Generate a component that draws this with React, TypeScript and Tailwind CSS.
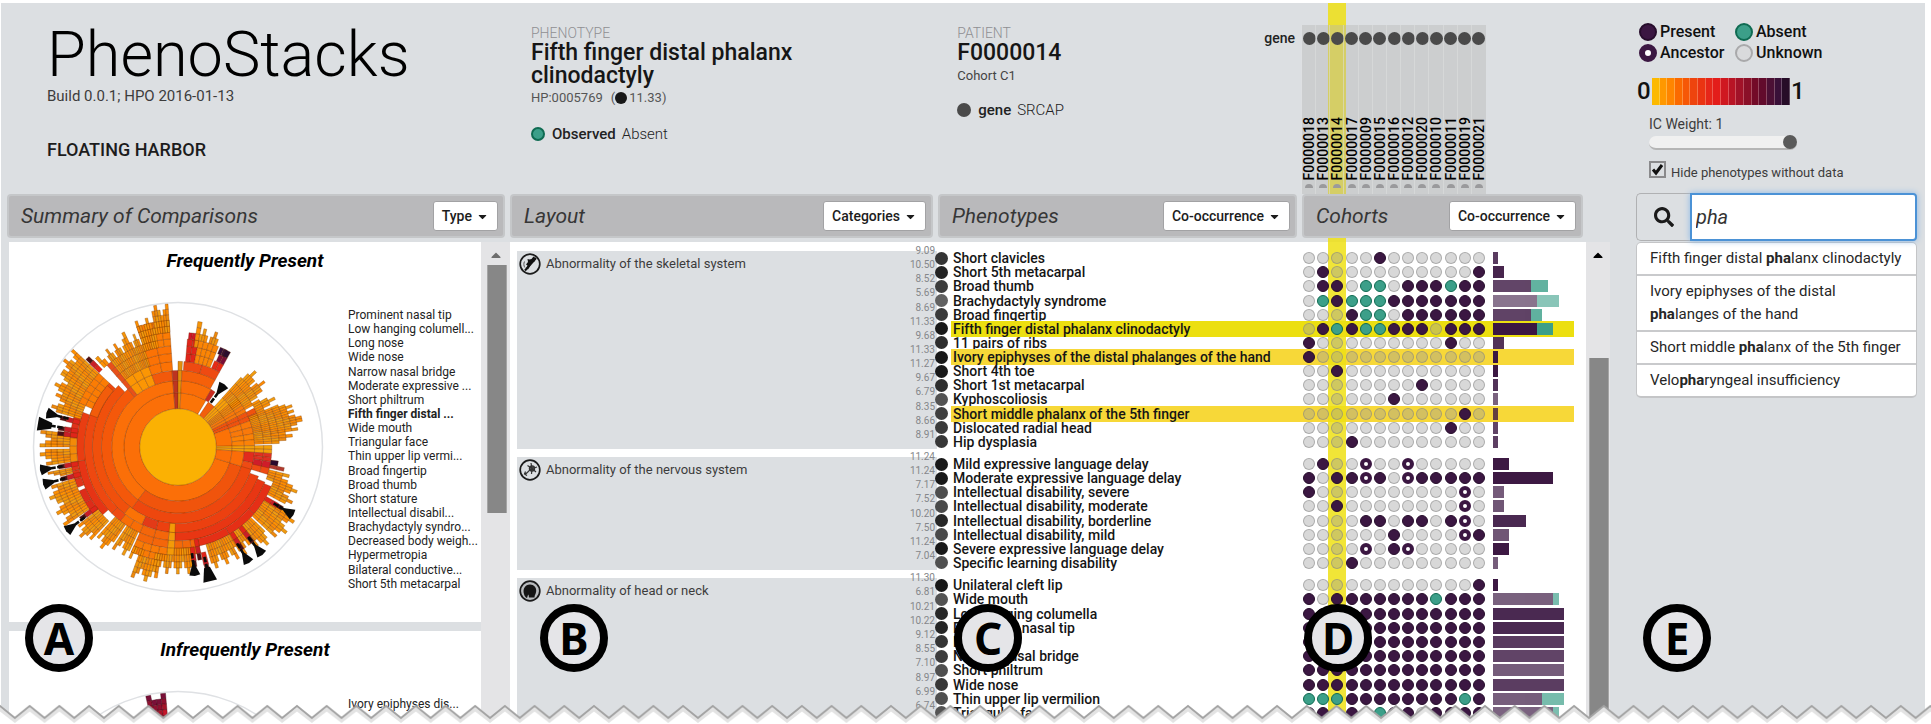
import React from "react";
import { FaSearch, FaCaretDown, FaCaretUp } from "react-icons/fa";

type Phenotype = { name: string; ic: number; cells: string; mark?: "selected" | "match" };
type Group = { title: string; icon: "bone" | "nerve" | "head"; height: string; rows: Phenotype[] };

const patients = ["18", "13", "14", "17", "09", "15", "16", "12", "20", "10", "11", "19", "21"].map((n) => "F00000" + n);

const groups: Group[] = [
  {
    title: "Abnormality of the skeletal system",
    icon: "bone",
    height: "h-[198px]",
    rows: [
      { name: "Short clavicles", ic: 9.09, cells: ".....P......." },
      { name: "Short 5th metacarpal", ic: 10.5, cells: ".P..........P" },
      { name: "Broad thumb", ic: 8.52, cells: ".PP.AA.PPPAPP" },
      { name: "Brachydactyly syndrome", ic: 5.69, cells: ".APAAAPPPPPPP" },
      { name: "Broad fingertip", ic: 8.69, cells: "...PAA.PPPPPP" },
      { name: "Fifth finger distal phalanx clinodactyly", ic: 11.33, cells: ".PAPAAPPP.PPP", mark: "selected" },
      { name: "11 pairs of ribs", ic: 9.68, cells: "P.........P.." },
      { name: "Ivory epiphyses of the distal phalanges of the hand", ic: 11.33, cells: "P............", mark: "match" },
      { name: "Short 4th toe", ic: 11.27, cells: "..P.........." },
      { name: "Short 1st metacarpal", ic: 9.67, cells: "........P...." },
      { name: "Kyphoscoliosis", ic: 6.79, cells: "......P......" },
      { name: "Short middle phalanx of the 5th finger", ic: 8.35, cells: "...........P.", mark: "match" },
      { name: "Dislocated radial head", ic: 8.66, cells: "..........P.." },
      { name: "Hip dysplasia", ic: 8.91, cells: "...P........." },
    ],
  },
  {
    title: "Abnormality of the nervous system",
    icon: "nerve",
    height: "h-[113px]",
    rows: [
      { name: "Mild expressive language delay", ic: 11.24, cells: ".P..N..N....." },
      { name: "Moderate expressive language delay", ic: 11.24, cells: "P.PPNP.NPPPPP" },
      { name: "Intellectual disability, severe", ic: 7.17, cells: "P..........N." },
      { name: "Intellectual disability, moderate", ic: 7.52, cells: "..P........N." },
      { name: "Intellectual disability, borderline", ic: 10.2, cells: "....PP.PP.PN." },
      { name: "Intellectual disability, mild", ic: 7.5, cells: "......P....NP" },
      { name: "Severe expressive language delay", ic: 11.24, cells: "....N.PN....." },
      { name: "Specific learning disability", ic: 7.04, cells: "...P........." },
    ],
  },
  {
    title: "Abnormality of head or neck",
    icon: "head",
    height: "h-[142px]",
    rows: [
      { name: "Unilateral cleft lip", ic: 11.3, cells: "............P" },
      { name: "Wide mouth", ic: 6.81, cells: "P.PPPPPPPAPPP" },
      { name: "Low hanging columella", ic: 10.21, cells: "PPPPPPPPPPPPP" },
      { name: "Prominent nasal tip", ic: 10.22, cells: "PPPPPPPPPPPPP" },
      { name: "Long nose", ic: 9.12, cells: "PPPPPPPPPPPPP" },
      { name: "Narrow nasal bridge", ic: 8.55, cells: "PPPPPPPPPPPPP" },
      { name: "Short philtrum", ic: 7.1, cells: "PPPPPPPPPPPPP" },
      { name: "Wide nose", ic: 8.97, cells: "PPPPPPPPPPPPP" },
      { name: "Thin upper lip vermilion", ic: 6.99, cells: "AAAPPPPPPPPAP" },
      { name: "Triangular face", ic: 6.74, cells: "PPPPPAPP.PPPP" },
    ],
  },
];

const frequent = [
  "Prominent nasal tip", "Low hanging columell...", "Long nose", "Wide nose", "Narrow nasal bridge",
  "Moderate expressive ...", "Short philtrum", "Fifth finger distal ...", "Wide mouth", "Triangular face",
  "Thin upper lip vermi...", "Broad fingertip", "Broad thumb", "Short stature", "Intellectual disabil...",
  "Brachydactyly syndro...", "Decreased body weigh...", "Hypermetropia", "Bilateral conductive...", "Short 5th metacarpal",
];

/* ---------- sunburst ---------- */

// [start angle, end angle, first ring, last ring (exclusive), colour, angular splits]
type Band = [number, number, number, number, string, number?];

const bands: Band[] = [
  [107, 355.5, 1, 2, "#fb6f08"],
  [217, 355.5, 2, 3, "#fb6f08"],
  [107, 217, 2, 3, "#f0540c"],
  [106, 217, 3, 4, "#ee470e"],
  [217, 319, 3, 4, "#f4580a"],
  [110, 195, 4, 5, "#ec4010"],
  [195, 205, 4, 5, "#e33a18"],
  [205, 219, 4, 5, "#fa7206"],
  [219, 316, 4, 5, "#f0500c"],
  [112, 182, 5, 6, "#e83613"],
  [182, 186, 4, 8, "#f39a08"],
  [186, 204, 5, 7, "#f4660a", 2],
  [204, 218, 5, 6, "#f86d06", 2],
  [218, 225, 5, 6, "#ee4a12"],
  [225, 313, 5, 6, "#ee4810"],
  [113, 168, 6, 7, "#e52f16", 3],
  [228, 262, 6, 7, "#e63415"],
  [262, 290, 6, 7, "#e93d12"],
  [290, 311, 5, 6, "#f25c0b"],
  [232, 246, 7, 8, "#dd2c1a", 2],
  [248, 262, 7, 8, "#e0341a", 3],
  [262, 275, 7, 8, "#f28a08", 3],
  [275, 287, 7, 8, "#e0311b", 3],
  [186, 204, 7, 9, "#f97a06", 4],
  [168, 182, 6, 8, "#f2690a", 3],
  [294, 313, 6, 8, "#fb7c04", 5],
  [319, 322, 3, 8, "#e8501a"],
  [322, 340, 3, 5, "#fb9604", 3],
  [340, 355.5, 3, 4, "#f2590b"],
  [340, 356, 4, 7, "#fb7205", 2],
  [341, 356, 7, 11, "#fb7c05", 4],
  [355.5, 360, 1, 4, "#bd3420"],
  [360, 363, 1, 5, "#e2900c"],
  [3, 31, 1, 2, "#fb7407"],
  [3, 30, 2, 3, "#fa6d08"],
  [3, 29, 3, 4, "#f5600a"],
  [4, 29, 4, 5, "#ee4a12", 2],
  [5, 11, 5, 8, "#e0251b", 2],
  [11, 22, 5, 8, "#fb8505", 4],
  [23, 29, 5, 6, "#e62a17", 2],
  [24, 29, 6, 7, "#7a0f38", 2],
  [23, 27, 7, 8, "#34103a", 2],
  [26, 29, 7, 8, "#2b0d2e"],
  [5.5, 9, 8, 9, "#ce1627", 2],
  [30, 34, 2, 3, "#c92b22"],
  [34, 42, 1, 2, "#f25e0c"],
  [42, 50, 1, 3, "#f8a008", 3],
  [50, 57, 1, 4, "#f58a08", 4],
  [57, 63, 1, 4, "#f7790a", 2],
  [63, 70, 1, 5, "#f0520e", 2],
  [70, 89, 1, 2, "#fb7206"],
  [70, 80, 2, 4, "#f9790a", 2],
  [80, 89, 2, 4, "#fb8206", 2],
  [89, 94, 1, 6, "#f3a00a", 2],
  [94, 107, 1, 3, "#fb6d08"],
  [94, 102, 3, 4, "#e22b1e"],
  [102, 107, 3, 6, "#ee4b14"],
  [94, 99, 4, 6, "#e03022", 2],
  [99, 103, 4, 6, "#cf1d2a"],
  [98, 101, 6, 7, "#2a0b2c"],
  [101, 103, 6, 8, "#b03a30"],
];

// Fine outer leaves: [start, end, first ring, mean outer ring, splits]
const leaves: [number, number, number, number, number][] = [
  [9, 11, 7, 10, 1],
  [11, 22, 8, 9, 8],
  [42, 48, 3, 7, 4],
  [48, 55, 3, 7, 5],
  [55, 61, 4, 6, 4],
  [61, 67, 5, 7, 4],
  [67, 72, 4, 9, 4],
  [72, 77, 4, 10, 4],
  [77, 82, 4, 10, 4],
  [82, 88, 4, 8, 4],
  [85, 87, 8, 9, 1],
  [104, 110, 6, 9, 4],
  [110, 118, 7, 10, 6],
  [121, 133, 7, 12, 9],
  [134, 142, 7, 11, 6],
  [143, 151, 7, 10, 6],
  [151, 164, 7, 10, 10],
  [173, 182, 7, 10, 7],
  [182, 192, 8, 10, 8],
  [189, 200, 9, 12, 8],
  [198, 204, 8, 9, 5],
  [205, 213, 6, 9, 6],
  [214, 222, 6, 10, 6],
  [223, 232, 7, 11, 7],
  [235, 246, 8, 12, 8],
  [246, 253, 8, 12, 5],
  [256, 259, 8, 11, 3],
  [262, 269, 8, 12, 5],
  [270, 277, 8, 12, 5],
  [286, 294, 7, 11, 6],
  [294, 303, 8, 12, 7],
  [303, 313, 8, 13, 8],
  [317, 322, 8, 9, 3],
  [322, 331, 5, 9, 8],
  [331, 335, 5, 10, 3],
  [335, 341, 5, 9, 6],
  [341, 349, 7, 11, 7],
  [349, 356, 9, 13, 6],
];

const redTips: [number, number][] = [
  [284, 9], [279, 9], [276.5, 9], [260.5, 9], [254.5, 9], [314.5, 10], [172, 9], [166.5, 10], [169, 8], [148, 9], [142, 9], [120.5, 9], [233.5, 9],
];

const flags: [number, number, number][] = [
  [36.5, 68, 1], [284.5, 126, 1], [279.5, 130, 2], [260.5, 130, 1], [254.5, 130, 1], [233, 130, 1],
  [172.5, 120, 1], [166.5, 126, 2], [148.5, 126, 1], [142, 127, 1], [120.5, 124, 1],
];

const ring = (l: number) => 38.3 * Math.sqrt(l);
const point = (r: number, a: number) => {
  const t = (a * Math.PI) / 180;
  return `${(r * Math.sin(t)).toFixed(2)} ${(-r * Math.cos(t)).toFixed(2)}`;
};
const arc = (a0: number, a1: number, l0: number, l1: number) => {
  const r0 = ring(l0);
  const r1 = ring(l1);
  const big = a1 - a0 > 180 ? 1 : 0;
  return `M${point(r0, a0)}A${r0} ${r0} 0 ${big} 1 ${point(r0, a1)}L${point(r1, a1)}A${r1} ${r1} 0 ${big} 0 ${point(r1, a0)}Z`;
};
const leafColours = ["#f59508", "#fb8a04", "#f09c10", "#fd9003", "#ee8a0c"];

function Burst() {
  const shapes: React.ReactNode[] = [];
  bands.forEach(([a0, a1, l0, l1, fill, split = 1], b) => {
    const step = (a1 - a0) / split;
    for (let l = l0; l < l1; l++)
      for (let s = 0; s < split; s++)
        shapes.push(<path key={`b${b}-${l}-${s}`} d={arc(a0 + s * step, a0 + (s + 1) * step, l, l + 1)} fill={fill} />);
  });
  leaves.forEach(([a0, a1, l0, l1, split], b) => {
    const step = (a1 - a0) / split;
    for (let s = 0; s < split; s++) {
      const h = (s * 7 + b * 5) % 4;
      const top = h === 0 ? l1 + 1 : h === 2 ? l1 - 1 : l1;
      for (let l = l0; l < Math.min(top, 13.5); l++)
        shapes.push(
          <path key={`l${b}-${l}-${s}`} d={arc(a0 + s * step, a0 + (s + 1) * step, l, l + 1)} fill={leafColours[(s * 3 + l * 2 + b) % 5]} />
        );
    }
  });
  return (
    <g>
      <g stroke="#6b2c00" strokeOpacity="0.6" strokeWidth="0.5">
        {shapes}
        {redTips.map(([a, l], i) => (
          <g key={i}>
            <path d={arc(a - 1.2, a + 1.2, l - 2, l - 1)} fill="#e0251b" />
            <path d={arc(a - 1.2, a + 1.2, l - 1, l)} fill="#c81e28" />
            <path d={arc(a - 1, a + 1, l, l + 1)} fill="#4a1018" />
          </g>
        ))}
        <circle r="38.3" fill="#fbb103" />
      </g>
      {flags.map(([a, r, n], i) => (
        <g key={i} transform={`rotate(${a}) translate(0 ${-r})`} fill="#0b0b0b">
          <path d="M0 0V13" stroke="#0b0b0b" strokeWidth="2.600" strokeDasharray="6 1.500" />
          <path d={n === 2 ? "M-7 -12L7 -12L3 2L-3 2Z" : "M-5.500 -9L0 -10L5.500 -9L1.500 1L-1.500 1Z"} />
        </g>
      ))}
    </g>
  );
}

function SmallBurst() {
  const fills = ["#7a0f38", "#8f1030", "#a51329", "#c4162a"];
  return (
    <g stroke="#3a0612" strokeOpacity="0.6" strokeWidth="0.6">
      {[347, 349, 351, 353].map((a, i) =>
        [13, 12, 11, 10, 9, 8].slice(i === 1 || i === 2 ? 1 : 0).map((l, k) => (
          <path key={`${a}-${l}`} d={arc(a, a + 2, l, l + 1)} fill={fills[Math.min(k, 3)]} />
        ))
      )}
      {[334, 336].map((a) => (
        <path key={a} d={arc(a, a + 2, 10, 11)} fill="#5b1848" />
      ))}
    </g>
  );
}

function SummaryCard({ title, items, strong, chart }: { title: string; items: string[]; strong?: string; chart: React.ReactNode }) {
  return (
    <section className="h-[380px] shrink-0 overflow-hidden bg-white">
      <h3 className="pt-[7px] text-center text-[19px] leading-6 font-bold text-black italic">{title}</h3>
      <div className="flex pt-[28px] pl-[23px]">
        <svg className="shrink-0" width="292" height="292" viewBox="-146 -146 292 292" aria-hidden="true">
          <circle r="144.500" fill="white" stroke="#dfe1e4" strokeWidth="1.500" />
          {chart}
        </svg>
        <ol className="mt-[7px] ml-[24px] flex h-[283px] flex-col text-[12px] whitespace-nowrap text-[#222]">
          {items.map((t) => (
            <li key={t} className={t === strong ? "flex h-[5%] items-center leading-none font-bold" : "flex h-[5%] items-center leading-none"}>
              {t}
            </li>
          ))}
        </ol>
      </div>
    </section>
  );
}

/* ---------- shared bits ---------- */

function Bar({ title, button, className }: { title: string; button: string; className: string }) {
  return (
    <div className={`relative z-20 flex h-[44px] items-center justify-between rounded-[4px] border-2 border-[#c5c7c9] bg-[#b9b9bb] pr-[5px] pl-3 ${className}`}>
      <h2 className="text-[21px] leading-none text-[#363636] italic">{title}</h2>
      <button className="flex h-[30px] items-center gap-1 rounded-[3px] border border-[#a2a2a4] bg-white px-2 text-[14px] font-medium text-[#1c1c1c]">
        {button}
        <FaCaretDown className="size-[13px]" />
      </button>
    </div>
  );
}

const dotStyles: Record<string, string> = {
  P: "size-3 rounded-full border border-[#270d2c] bg-[#3b1742]",
  A: "size-3 rounded-full border border-[#0f6b52] bg-[#3c9f89]",
  N: "size-3 rounded-full border-4 border-[#3b1742] bg-white",
  ".": "size-3 rounded-full border border-[#80808080] bg-[#9d9d9d66]",
};

function Row({ row }: { row: Phenotype }) {
  const shade = Math.round(24 + (11.33 - row.ic) * 13);
  const present = row.cells.split("").filter((c) => c === "P" || c === "N").length;
  const absent = row.cells.split("").filter((c) => c === "A").length;
  const mark = row.mark === "selected" ? "bg-[#ecdf10]" : row.mark === "match" ? "bg-[#f7d838]" : "";
  return (
    <div className="flex min-h-0 flex-1 items-center">
      <span className="relative z-10 -ml-[2px] size-[13px] shrink-0 rounded-full" style={{ backgroundColor: `rgb(${shade},${shade},${shade})` }} />
      <div className={`ml-[3px] flex h-4 min-w-0 flex-1 items-center ${mark}`}>
        <span className="w-[351px] pl-[2px] text-[14px] leading-4 font-medium whitespace-nowrap text-[#151515]">{row.name}</span>
        <span className="relative z-10 flex w-[184px]">
          {row.cells.split("").map((c, i) => (
            <span key={i} className="flex flex-1 justify-center">
              <span className={dotStyles[c]} />
            </span>
          ))}
        </span>
        <span className="ml-[7px] flex h-3 w-[71px]" style={{ opacity: 0.2 + (0.8 * row.ic) / 11.33 }}>
          <span className="bg-[#3b1742]" style={{ width: `${(present / 13) * 100}%` }} />
          <span className="bg-[#3c9f89]" style={{ width: `${(absent / 13) * 100}%` }} />
        </span>
      </div>
    </div>
  );
}

function CategoryIcon({ kind }: { kind: Group["icon"] }) {
  return (
    <svg width="22" height="22" viewBox="0 0 22 22" aria-hidden="true">
      <circle cx="11" cy="11" r="9.8" fill={kind === "head" ? "#b9bcbf" : "#dcdfe2"} stroke="#1b1b1b" strokeWidth="1.7" />
      {kind === "bone" && (
        <g fill="#111">
          <path d="M14.5 3.5l2.5 2-1.5 3-3 1.5-2 4-1.5 2.5-2-1 1.500-3-1.500-1 2-2.500-.5-3 2 .5 2-.5z" />
          <path d="M17 5L6 17.500" stroke="#111" strokeWidth="2" />
          <path d="M5.500 8.500c-1 2-.8 4.500.4 6" stroke="#555" fill="none" />
        </g>
      )}
      {kind === "nerve" && (
        <g stroke="#333" fill="#555" strokeWidth="1.200">
          <circle cx="13" cy="9.500" r="2.600" />
          <path d="M13 9.500L12 4M13 9.500L18 8M13 9.500L17 13M13 9.500L8.500 6.500M13 9.500L12.500 15M13 9.500C9 11 9 15 5.500 15M6.500 12.500l-1 2.500 2.500 1.500" fill="none" />
        </g>
      )}
      {kind === "head" && <path d="M5 14c-1.500-5 1-9.500 6-9.500 4 0 6.500 3 6.200 6.500-.2 3-1.700 4-1.700 6.500h-5.500l-.5-3c-1 1-1 2.500-1.500 3.500C6.500 17.500 5.500 16 5 14z" fill="#161616" />}
    </svg>
  );
}

function ScrollTrack({ className, thumb, caret }: { className: string; thumb: string; caret: string }) {
  return (
    <div className={`flex flex-col bg-[#e4e4e6] ${className}`}>
      <FaCaretUp className={`size-4 self-center ${caret}`} />
      <div className={`border-x border-[#a5a5a5] bg-[#878787] ${thumb}`} />
    </div>
  );
}

function Badge({ letter, className }: { letter: string; className: string }) {
  return (
    <span className={`absolute top-[604px] z-30 flex size-[68px] items-center justify-center rounded-full border-[8px] border-black bg-[#e5e5e8] font-['Noto_Sans'] text-[44px] leading-none font-bold text-black ${className}`}>
      {letter}
    </span>
  );
}

const ramp = [
  "bg-[#fcb900]", "bg-[#ff9800]", "bg-[#ff8500]", "bg-[#fb6a00]", "bg-[#f65806]", "bg-[#ee440e]", "bg-[#ea3412]",
  "bg-[#e62619]", "bg-[#e31d1a]", "bg-[#cf1820]", "bg-[#b81425]", "bg-[#a11228]", "bg-[#8a1028]", "bg-[#730b28]",
  "bg-[#620b2c]", "bg-[#4c1035]", "bg-[#391038]", "bg-[#260c28]",
];

const suggestions = [
  ["Fifth finger distal ", "lanx clinodactyly"],
  ["Ivory epiphyses of the distal ", "langes of the hand"],
  ["Short middle ", "lanx of the 5th finger"],
  ["Velo", "ryngeal insufficiency"],
];

const legend = [
  { label: "Present", dot: "border-[#270d2c] bg-[#3b1742] border-2" },
  { label: "Absent", dot: "border-[#0f6b52] bg-[#3c9f89] border-2" },
  { label: "Ancestor", dot: "border-[#3b1742] bg-white border-[6px]" },
  { label: "Unknown", dot: "border-[#a9a9ab] bg-[#d9dadc] border-2" },
];

function Torn() {
  return (
    <svg className="absolute bottom-0 left-0 z-40 h-[20px] w-full" aria-hidden="true">
      <defs>
        <pattern id="torn" width="29.7" height="20" patternUnits="userSpaceOnUse">
          <path d="M-2 1L0 2L14.850 14L29.700 2L32 4V20H-2Z" fill="white" />
          <path d="M-5 9.500L0 5.500L14.850 17L29.700 5.500L34 9" fill="none" stroke="#e3e3e3" strokeWidth="3" />
          <path d="M-5 6L0 2L14.850 14L29.700 2L34 6" fill="none" stroke="#a3a3a3" strokeWidth="2" />
        </pattern>
      </defs>
      <rect width="100%" height="20" fill="url(#torn)" />
    </svg>
  );
}

export default function App() {
  return (
    <div className="relative h-screen overflow-hidden bg-white pt-[3px] pr-[6px] pl-px font-['Roboto','Liberation_Sans',sans-serif] text-[#222]">
      <div className="flex h-full bg-[#dcdfe2]">
        <main className="relative flex min-w-0 flex-1 flex-col">
          <div className="absolute top-0 right-[264px] bottom-0 w-[18px] bg-[#eee114d9]" />

          <header className="flex h-[191px] shrink-0">
            <div className="w-[530px] shrink-0 pl-[46px]">
              <h1 className="mt-[20px] text-[63px] leading-[64px] font-light text-black">PhenoStacks</h1>
              <p className="-mt-px text-[15px] leading-5 text-[#3c3c3c]">Build 0.0.1; HPO 2016-01-13</p>
              <p className="mt-[32px] text-[18px] leading-6 font-medium text-[#1c1c1c]">FLOATING HARBOR</p>
            </div>
            <div className="min-w-0 flex-1 pt-[22px]">
              <p className="text-[14px] leading-4 font-light text-[#8f8f92]">PHENOTYPE</p>
              <h2 className="w-[290px] text-[23px] leading-[23px] font-medium text-[#161616]">Fifth finger distal phalanx clinodactyly</h2>
              <p className="mt-[1px] flex items-center text-[13px] leading-5 text-[#555]">
                HP:0005769<span className="ml-2">(</span>
                <span className="size-3 rounded-full bg-[#181818]" />
                <span className="ml-[2px]">11.33)</span>
              </p>
              <p className="mt-[14px] flex items-center text-[15px] leading-6">
                <span className="mr-[7px] size-[14px] rounded-full border-2 border-[#0f6b52] bg-[#3c9f89]" />
                <span className="mr-[6px] font-medium">Observed</span>
                <span className="font-light">Absent</span>
              </p>
            </div>
            <div className="w-[307px] shrink-0 pt-[22px]">
              <p className="text-[14px] leading-4 font-light text-[#8f8f92]">PATIENT</p>
              <h2 className="text-[23px] leading-[23px] font-medium text-[#161616]">F0000014</h2>
              <p className="mt-[2px] text-[13px] leading-5 text-[#444]">Cohort C1</p>
              <p className="mt-[12px] flex items-center text-[15px] leading-6">
                <span className="mr-[7px] size-[14px] rounded-full bg-[#4a4a4a]" />
                <span className="mr-[6px] font-medium">gene</span>
                <span className="font-light">SRCAP</span>
              </p>
            </div>
            <div className="mr-[124px] flex shrink-0 pt-[22px]">
              <span className="relative z-10 mt-[3px] mr-[7px] text-[14px] leading-5 font-medium">gene</span>
              <ul className="relative z-10 flex w-[184px] shrink-0">
                {patients.map((p) => (
                  <li key={p} className="flex w-0 min-w-0 flex-1 flex-col items-center bg-[#b4b4b466] shadow-[-1px_0_0_#e0e1e180]">
                    <span className="mt-[7px] size-[13px] shrink-0 rounded-full bg-[#4a4a4a]" />
                    <span className="mt-auto mb-[4px] rotate-180 text-[14px] leading-[14px] font-medium text-black [writing-mode:vertical-rl]">{p}</span>
                    <span className="mb-[6px] h-1 w-2 rounded-t-full bg-[#9a9a9c]" />
                  </li>
                ))}
              </ul>
            </div>
          </header>

          <div className="flex shrink-0 gap-[5px] pr-[27px] pl-[6px]">
            <Bar title="Summary of Comparisons" button="Type" className="w-[498px]" />
            <Bar title="Layout" button="Categories" className="min-w-0 flex-1" />
            <Bar title="Phenotypes" button="Co-occurrence" className="w-[359px]" />
            <Bar title="Cohorts" button="Co-occurrence" className="w-[281px]" />
          </div>

          <div className="mt-[4px] flex min-h-0 flex-1 overflow-hidden">
            <div className="flex w-[480px] shrink-0 flex-col gap-[9px] pl-2">
              <SummaryCard title="Frequently Present" items={frequent} strong="Fifth finger distal ..." chart={<Burst />} />
              <SummaryCard title="Infrequently Present" items={["Ivory epiphyses dis..."]} chart={<SmallBurst />} />
            </div>
            <ScrollTrack className="w-[29px] shrink-0 pt-[5px]" thumb="ml-[6px] mt-[2px] h-[248px] w-5" caret="text-[#6d6d6d]" />
            <div className="flex min-w-0 flex-1 flex-col gap-2 bg-white pt-[9px] pl-[7px]">
              {groups.map((g) => (
                <section key={g.title} className={`flex shrink-0 ${g.height}`}>
                  <div className="flex min-w-0 flex-1 justify-between bg-[#dcdfe2] pr-[2px] pl-[2px]">
                    <h3 className="mt-[2px] flex h-[22px] items-center gap-[5px] text-[13px] text-[#3c3c3c]">
                      <CategoryIcon kind={g.icon} />
                      {g.title}
                    </h3>
                    <ul className="-mt-[7px] mb-[7px] flex flex-col text-right text-[10px] leading-none text-[#85878a]">
                      {g.rows.map((r) => (
                        <li key={r.name} className="flex flex-1 items-center justify-end">
                          {r.ic.toFixed(2)}
                        </li>
                      ))}
                    </ul>
                  </div>
                  <div className="flex w-[637px] shrink-0 flex-col">
                    {g.rows.map((r) => (
                      <Row key={r.name} row={r} />
                    ))}
                  </div>
                  <div className="w-3 shrink-0" />
                </section>
              ))}
            </div>
            <ScrollTrack className="w-6 shrink-0 pt-[5px]" thumb="ml-[3px] mt-[95px] flex-1 w-5" caret="text-black" />
          </div>
        </main>

        <aside className="w-[315px] shrink-0 pr-2 pl-[26px]">
          <ul className="grid w-[190px] grid-cols-[96px_1fr] pt-[18px]">
            {legend.map((l) => (
              <li key={l.label} className="flex h-[21px] items-center gap-[3px] pl-[3px] text-[16px] leading-none font-medium text-[#111]">
                <span className={`size-[18px] shrink-0 rounded-full ${l.dot}`} />
                {l.label}
              </li>
            ))}
          </ul>
          <div className="mt-[15px] flex items-center text-[24px] leading-[27px] font-medium text-[#111]">
            <span className="w-4 pl-px">0</span>
            <span className="flex h-[27px] w-[138px]">
              {ramp.map((c) => (
                <span key={c} className={`flex-1 border-r border-[#ffffff40] ${c}`} />
              ))}
            </span>
            <span className="ml-px">1</span>
          </div>
          <div className="pl-[13px]">
            <label htmlFor="ic" className="mt-[9px] block text-[14px] leading-5 text-[#3c3c3c]">IC Weight: 1</label>
            <input
              id="ic"
              type="range"
              min="0"
              max="1"
              step="0.1"
              defaultValue="1"
              className="mt-[2px] block h-[14px] w-[148px] appearance-none rounded-full border-b-2 border-[#b5b5b5] bg-[#f0f0f0] [&::-webkit-slider-thumb]:size-[14px] [&::-webkit-slider-thumb]:appearance-none [&::-webkit-slider-thumb]:rounded-full [&::-webkit-slider-thumb]:bg-[#5a5a5a]"
            />
            <label className="mt-[11px] flex h-5 text-[13px] leading-6 whitespace-nowrap text-[#3c3c3c]">
              <span className="relative mr-[5px] size-[17px]">
                <input type="checkbox" defaultChecked className="block size-[17px] appearance-none border-2 border-[#8a8a8c] bg-[#dcdfe2]" />
                <svg className="absolute inset-0" width="17" height="17" viewBox="0 0 17 17" aria-hidden="true">
                  <path d="M4 8.500l3 3.500 6-8" fill="none" stroke="#111" strokeWidth="3" />
                </svg>
              </span>
              Hide phenotypes without data
            </label>
          </div>
          <div className="mt-[12px] flex h-[48px]">
            <button aria-label="Search" className="flex w-[54px] items-center justify-center rounded-l-[5px] border border-r-0 border-[#b0b1b3]">
              <FaSearch className="size-5 text-[#1a1a1a]" />
            </button>
            <input
              aria-label="Search phenotypes"
              defaultValue="pha"
              className="min-w-0 flex-1 rounded-r-[4px] border-2 border-[#4b92d6] bg-white px-[4px] text-[20px] text-[#333] italic shadow-[0_0_6px_#8bb8e6] outline-none"
            />
          </div>
          <ul className="mt-px divide-y-2 divide-[#c9cacc] rounded-[5px] border border-b-2 border-[#c4c5c7] bg-white">
            {suggestions.map(([a, b]) => (
              <li key={a} className="py-[4px] pr-[12px] pl-[13px] text-[15px] leading-[23px] text-[#262626]">
                {a}
                <b>pha</b>
                {b}
              </li>
            ))}
          </ul>
        </aside>
      </div>

      <Badge letter="A" className="left-[25px]" />
      <Badge letter="B" className="left-[540px]" />
      <Badge letter="C" className="right-[909px]" />
      <Badge letter="D" className="right-[559px]" />
      <Badge letter="E" className="right-[220px]" />
      <Torn />
    </div>
  );
}
